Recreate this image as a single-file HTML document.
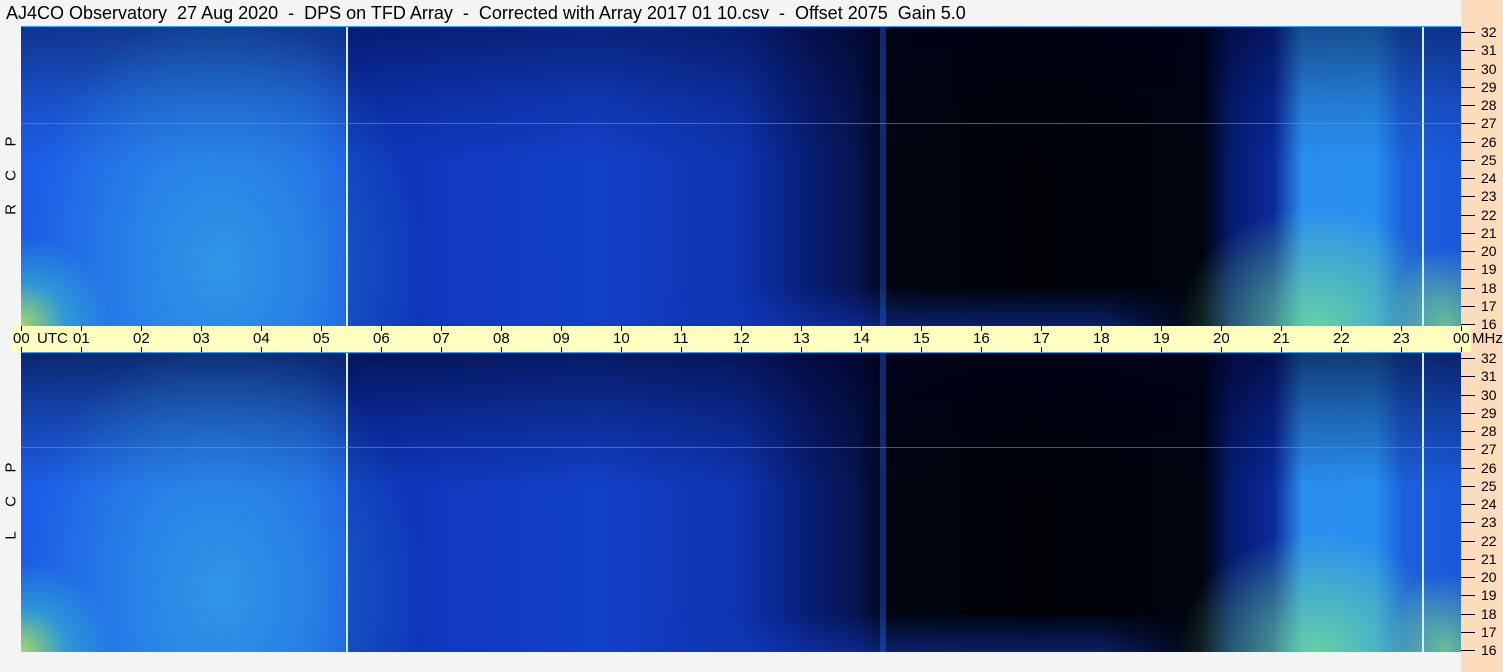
<!DOCTYPE html><html><head><style>
body{margin:0;width:1503px;height:672px;background:#f4f4f4;position:relative;overflow:hidden;font-family:"Liberation Sans",sans-serif}
.t{position:absolute;left:6px;top:3px;font-size:18px;color:#000;white-space:pre}
.peach{position:absolute;left:1461px;top:0;width:42px;height:672px;background:#fddcbc}
.plot{position:absolute;left:21px;width:1440px;height:300px;overflow:hidden}
.p1{top:26px}.p2{top:352px}
.base{position:absolute;inset:0;background:linear-gradient(90deg,#1c5ce6 0,#2068e8 9%,#1f64e6 20%,#1b58e0 22.5%,#0d34b8 22.7%,#1240c8 40%,#0e34b0 50%,#081c70 55%,#061450 58%,#000510 60.3%,#000208 70%,#00040f 82%,#061a70 84%,#0a2a9a 87%,#2a8ef0 89%,#2890f0 94%,#1c60dc 96%,#1a58dc 100%)}
.dark{position:absolute;inset:0;background:linear-gradient(180deg,rgba(0,0,30,.45) 0,rgba(0,0,30,.15) 25%,rgba(0,0,0,0) 45%)}
.glow{position:absolute;inset:0;background:radial-gradient(ellipse 90px 90px at 0% 100%,rgba(180,230,90,.9),rgba(60,200,200,.5) 50%,rgba(0,0,0,0) 100%),radial-gradient(ellipse 140px 120px at 90% 100%,rgba(120,230,140,.75),rgba(0,0,0,0) 100%),radial-gradient(ellipse 200px 260px at 14% 80%,rgba(60,190,230,.55),rgba(0,0,0,0) 100%),radial-gradient(ellipse 60px 80px at 99% 100%,rgba(140,230,120,.7),rgba(0,0,0,0) 100%)}
.glow2{position:absolute;left:0;right:0;bottom:0;height:40px;background:linear-gradient(0deg,rgba(20,60,200,.5),rgba(20,60,200,0));-webkit-mask:linear-gradient(90deg,transparent 45%,#000 52%,#000 75%,transparent 82%);mask:linear-gradient(90deg,transparent 45%,#000 52%,#000 75%,transparent 82%)}
.vl{position:absolute;top:0;bottom:0;width:2px}
.hl{position:absolute;left:0;right:0;height:1px;background:rgba(60,160,255,.6)}
.axis{position:absolute;left:12px;top:326px;width:1459px;height:26px;background:#ffffc0}
.lbl{position:absolute;top:4px;font-size:15px}
.tick{position:absolute;width:1px;height:5px;background:#000}
.rl{position:absolute;left:1481px;font-size:14px}
.rt{position:absolute;left:1461px;width:14px;height:1px;background:#000}
.rot{position:absolute;left:3px;font-size:15px;transform:rotate(-90deg);transform-origin:center;width:16px;text-align:center}
</style></head><body>
<div class="peach"></div>
<div class="t">AJ4CO Observatory  27 Aug 2020  -  DPS on TFD Array  -  Corrected with Array 2017 01 10.csv  -  Offset 2075  Gain 5.0</div>
<div class="rot" style="top:201px">R</div><div class="rot" style="top:167px">C</div><div class="rot" style="top:133px">P</div>
<div class="rot" style="top:527px">L</div><div class="rot" style="top:493px">C</div><div class="rot" style="top:459px">P</div>

<div class="plot p1"><div class="base"></div><div class="dark"></div><div class="glow"></div><div class="glow2"></div>
<div class="vl" style="left:325px;background:#d0f0ff"></div><div class="vl" style="left:1401px;background:#d0f0ff"></div>
<div class="vl" style="left:859px;width:6px;background:rgba(40,100,230,.4)"></div>
<div class="hl" style="top:97px"></div><div class="hl" style="top:0;background:#30a0ff"></div></div>

<div class="plot p2"><div class="base"></div><div class="dark" style="background:linear-gradient(180deg,rgba(0,0,30,.6) 0,rgba(0,0,30,.3) 20%,rgba(0,0,0,0) 45%)"></div><div class="glow"></div><div class="glow2"></div>
<div class="vl" style="left:325px;background:#d0f0ff"></div><div class="vl" style="left:1401px;background:#d0f0ff"></div>
<div class="vl" style="left:859px;width:6px;background:rgba(40,100,230,.4)"></div>
<div class="hl" style="top:95px"></div><div class="hl" style="top:0;background:#30a0ff"></div></div>

<div class="axis" id="ax"></div>
<script>
var ax=document.getElementById('ax'),h='';
for(var i=0;i<=24;i++){var x=9+i*60;h+='<div class="tick" style="left:'+x+'px;top:0"></div><div class="tick" style="left:'+x+'px;top:21px"></div>';
var s=i==24?'00':(i<10?'0'+i:''+i);h+='<div class="lbl" style="left:'+(i==24?x-8:x-8)+'px">'+s+'</div>';}
h+='<div class="lbl" style="left:25px">UTC</div><div class="lbl" style="left:1460px">MHz</div>';
ax.innerHTML=h;
var b=document.body,r='';
for(var p=0;p<2;p++){var y0=p?358:32;for(var k=0;k<=16;k++){var y=y0+k*18.25;r+='<div class="rt" style="top:'+Math.round(y)+'px"></div><div class="rl" style="top:'+Math.round(y-8)+'px">'+(32-k)+'</div>';}}
b.insertAdjacentHTML('beforeend',r);
</script>
</body></html>
